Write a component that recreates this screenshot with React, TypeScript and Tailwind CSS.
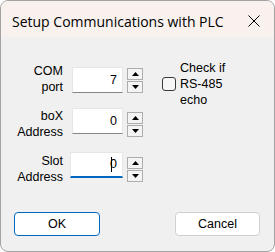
function Spinner({ className = '' }: { className?: string }) {
  return (
    <div className={`flex flex-col gap-[1px] w-[16px] ${className}`}>
      <div className="h-[12px] border border-[#adadad] bg-[#f4f4f4] flex items-center justify-center">
        <svg width="7" height="4" viewBox="0 0 7 4">
          <path d="M3.5 0L7 4H0z" fill="#000" />
        </svg>
      </div>
      <div className="h-[12px] border border-[#adadad] bg-[#f4f4f4] flex items-center justify-center">
        <svg width="7" height="4" viewBox="0 0 7 4">
          <path d="M0 0H7L3.5 4z" fill="#000" />
        </svg>
      </div>
    </div>
  );
}

function Label({ lines, className = '' }: { lines: string[]; className?: string }) {
  return (
    <div className={`w-[62px] shrink-0 text-right leading-[16px] ${className}`}>
      {lines.map((l) => (
        <div key={l}>{l}</div>
      ))}
    </div>
  );
}

export default function App() {
  return (
    <div className="w-[275px] h-[252px] bg-white text-black">
      <div className="w-[275px] h-[252px] flex flex-col rounded-[8px] border border-[#a3a3a3] bg-[#f0f0f0] overflow-hidden">
        {/* Title bar */}
        <div className="h-[36px] shrink-0 bg-[#f8f1ee] flex items-center justify-between pl-[11px] pr-[14px] pt-[4px] font-['Open_Sans',sans-serif] text-[14px]">
          <span>Setup Communications with PLC</span>
          <svg width="12" height="12" viewBox="0 0 12 12">
            <path d="M0.5 0.5L11.5 11.5M11.5 0.5L0.5 11.5" stroke="#000" strokeWidth="1" />
          </svg>
        </div>

        <div className="flex-1 flex flex-col font-['Liberation_Sans',Arial,sans-serif] text-[12.5px]">
          <div className="flex pt-[26px]">
            {/* Fields */}
            <div className="flex flex-col">
              <div className="flex items-start h-[45px]">
                <Label lines={['COM', 'port']} />
                <div className="ml-[9px] mt-[4px] w-[51px] h-[26px] bg-white border border-[#e6e6e6] border-b-[#868686] flex items-center justify-end pr-[5px]">
                  7
                </div>
                <Spinner className="ml-[4px] mt-[5px]" />
              </div>
              <div className="flex items-start h-[44px]">
                <Label lines={['boX', 'Address']} />
                <div className="ml-[9px] w-[51px] h-[26px] bg-white border border-[#e6e6e6] border-b-[#868686] flex items-center justify-end pr-[5px]">
                  0
                </div>
                <Spinner className="ml-[4px] mt-[4px]" />
              </div>
              <div className="flex items-start">
                <Label lines={['Slot', 'Address']} className="mt-[1px]" />
                <div className="ml-[7px] w-[53px] h-[26px] bg-white border border-[#e6e6e6] border-b-2 border-b-[#0067c0] flex items-center justify-end pr-[5px]">
                  <span className="inline-block w-[1px] h-[15px] bg-black mr-[-2px]" />
                  0
                </div>
                <Spinner className="ml-[4px] mt-[5px]" />
              </div>
            </div>

            {/* Checkbox */}
            <div className="ml-[19px] -mt-[3px] flex items-center h-[48px]">
              <div className="w-[14px] h-[14px] rounded-[3px] border border-[#3a3a3a] bg-[#f6f6f6] shrink-0" />
              <div className="ml-[4px] leading-[16px]">
                <div>Check if</div>
                <div>RS-485</div>
                <div>echo</div>
              </div>
            </div>
          </div>

          {/* Buttons */}
          <div className="mt-auto flex justify-between pl-[13px] pr-[14px] pb-[15px]">
            <button className="w-[86px] h-[24px] rounded-[4px] border border-[#0067c0] bg-white">OK</button>
            <button className="w-[85px] h-[24px] rounded-[4px] border border-[#d0d0d0] bg-white">Cancel</button>
          </div>
        </div>
      </div>
    </div>
  );
}
